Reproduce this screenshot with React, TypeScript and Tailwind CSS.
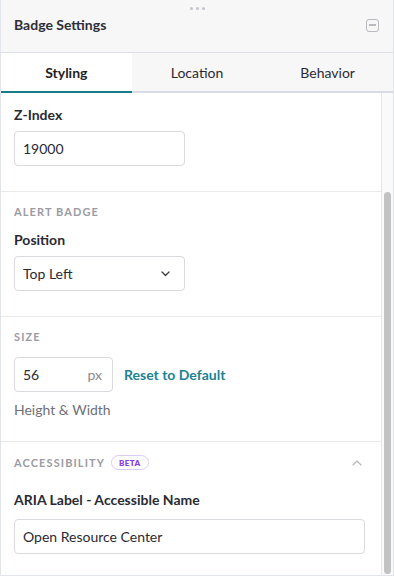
import React from "react";

const font = { fontFamily: "Lato, 'Open Sans', sans-serif" };

function SectionHeading({ children }: { children: React.ReactNode }) {
  return (
    <div className="text-[11px] leading-[14px] font-bold tracking-[0.1em] uppercase text-[#9b9ba3]">
      {children}
    </div>
  );
}

function Label({ children }: { children: React.ReactNode }) {
  return <div className="text-[14px] leading-[18px] font-bold text-[#2a2a33]">{children}</div>;
}

export default function App() {
  return (
    <div
      style={font}
      className="w-[394px] h-[576px] bg-white border-x border-b border-[#e1e4ea] flex flex-col overflow-hidden text-[#2a2a33]"
    >
      {/* Header */}
      <div className="h-[53px] shrink-0 bg-[#f7f7f7] border-b border-[#dcdfe6] flex flex-col">
        <div className="flex justify-center gap-[3px] pt-[7px]">
          <span className="w-[3px] h-[3px] rounded-full bg-[#c3c4cc]" />
          <span className="w-[3px] h-[3px] rounded-full bg-[#c3c4cc]" />
          <span className="w-[3px] h-[3px] rounded-full bg-[#c3c4cc]" />
        </div>
        <div className="flex items-center justify-between pl-[13px] pr-[14px] mt-[6px]">
          <div className="text-[14px] leading-[18px] font-bold text-[#2e2e36]">Badge Settings</div>
          <div className="w-[13px] h-[13px] rounded-[3px] border-[1.5px] border-[#b9b9bf] flex items-center justify-center">
            <div className="w-[7px] h-[1.5px] bg-[#b9b9bf]" />
          </div>
        </div>
      </div>

      {/* Tabs */}
      <div className="h-[40px] shrink-0 grid grid-cols-3 text-[14px]">
        <div className="bg-white border-b-2 border-[#177d8b] flex items-center justify-center font-bold text-[#1f1f26]">
          Styling
        </div>
        <div className="bg-[#f7f7f7] border-b-2 border-[#d8dbe3] flex items-center justify-center text-[#2a2a33]">
          Location
        </div>
        <div className="bg-[#f7f7f7] border-b-2 border-[#d8dbe3] flex items-center justify-center text-[#2a2a33]">
          Behavior
        </div>
      </div>

      {/* Body */}
      <div className="flex flex-1 min-h-0">
        <div className="flex-1 min-w-0 overflow-hidden border-r border-[#e6e6e6]">
          {/* Z-index */}
          <div className="px-[13px] pt-[13px] pb-[25px] border-b border-[#e9e9ec]">
            <Label>Z-Index</Label>
            <div className="mt-[7px] w-[171px] h-[35px] border border-[#d9d9de] rounded-[4px] flex items-center px-[8px] text-[14px]">
              19000
            </div>
          </div>

          {/* Alert badge */}
          <div className="px-[13px] pt-[13px] pb-[25px] border-b border-[#e9e9ec]">
            <SectionHeading>Alert Badge</SectionHeading>
            <div className="mt-[12px]">
              <Label>Position</Label>
            </div>
            <div className="mt-[7px] w-[171px] h-[35px] border border-[#d9d9de] rounded-[4px] flex items-center justify-between pl-[8px] pr-[14px] text-[14px]">
              <span>Top Left</span>
              <svg width="9" height="6" viewBox="0 0 9 6" fill="none">
                <path d="M1 1l3.5 3.5L8 1" stroke="#3a3a42" strokeWidth="1.3" strokeLinecap="round" strokeLinejoin="round" />
              </svg>
            </div>
          </div>

          {/* Size */}
          <div className="px-[13px] pt-[13px] pb-[22px] border-b border-[#e9e9ec]">
            <SectionHeading>Size</SectionHeading>
            <div className="mt-[13px] flex items-center gap-[11px]">
              <div className="w-[99px] h-[35px] border border-[#d9d9de] rounded-[4px] flex items-center justify-between pl-[8px] pr-[10px] text-[14px]">
                <span>56</span>
                <span className="text-[#8a8a92]">px</span>
              </div>
              <span className="text-[14px] font-bold text-[#1b8393]">Reset to Default</span>
            </div>
            <div className="mt-[9px] text-[14px] leading-[18px] text-[#6f6f78]">Height &amp; Width</div>
          </div>

          {/* Accessibility */}
          <div className="px-[13px] pt-[13px] pb-[25px]">
            <div className="flex items-center justify-between pr-[6px]">
              <div className="flex items-center gap-[6px]">
                <SectionHeading>Accessibility</SectionHeading>
                <span className="h-[15px] px-[7px] rounded-full border border-[#dccaf7] text-[8px] font-extrabold tracking-[0.05em] text-[#8a3ee6] flex items-center leading-none">
                  BETA
                </span>
              </div>
              <svg width="10" height="6" viewBox="0 0 10 6" fill="none">
                <path d="M1 5l4-4 4 4" stroke="#b8b8bf" strokeWidth="1.2" strokeLinecap="round" strokeLinejoin="round" />
              </svg>
            </div>
            <div className="mt-[21px]">
              <Label>ARIA Label - Accessible Name</Label>
            </div>
            <div className="mt-[10px] w-[351px] h-[35px] border border-[#d9d9de] rounded-[4px] flex items-center px-[8px] text-[14px]">
              Open Resource Center
            </div>
          </div>
        </div>

        {/* Scrollbar */}
        <div className="w-[11px] shrink-0 bg-[#fafafa] flex justify-center">
          <div className="mt-[99px] w-[7px] h-[382px] rounded-full bg-[#c2c2c2]" />
        </div>
      </div>
    </div>
  );
}
